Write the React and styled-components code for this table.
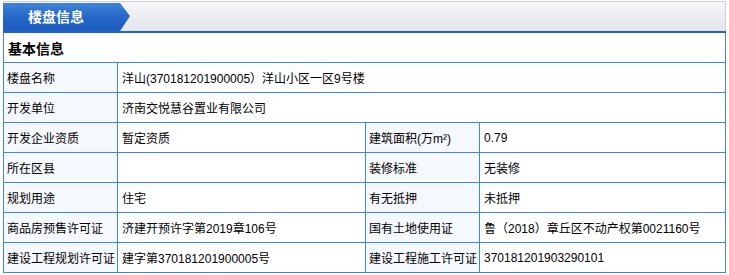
import React from 'react';
import styled, { createGlobalStyle } from 'styled-components';

const GlobalStyle = createGlobalStyle`
  html, body {
    margin: 0;
    padding: 0;
    background: #ffffff;
  }
  body {
    font-family: "Liberation Sans", "Noto Sans CJK SC", Arial, sans-serif;
    font-size: 12px;
    color: #000;
  }
`;

const rows = [
  { cells: [['楼盘名称', '洋山(370181201900005）洋山小区一区9号楼']] },
  { cells: [['开发单位', '济南交悦慧谷置业有限公司']] },
  { cells: [['开发企业资质', '暂定资质'], ['建筑面积(万m²)', '0.79']] },
  { cells: [['所在区县', ''], ['装修标准', '无装修']] },
  { cells: [['规划用途', '住宅'], ['有无抵押', '未抵押']] },
  { cells: [['商品房预售许可证', '济建开预许字第2019章106号'], ['国有土地使用证', '鲁（2018）章丘区不动产权第0021160号']] },
  { cells: [['建设工程规划许可证', '建字第370181201900005号'], ['建设工程施工许可证', '370181201903290101']] },
];

export default function App() {
  return (
    <>
      <GlobalStyle />
      <Page>
        <Header>
          <Tab>楼盘信息</Tab>
          <Band />
        </Header>
        <BlueLine />
        <Table>
          <Caption>基本信息</Caption>
          {rows.map((row, i) =>
            row.cells.map(([label, value], j) => (
              <React.Fragment key={`${i}-${j}`}>
                <Label>{label}</Label>
                <Value wide={row.cells.length === 1}>{value}</Value>
              </React.Fragment>
            ))
          )}
        </Table>
      </Page>
    </>
  );
}

const Page = styled.div`
  width: 723px;
  margin-left: 3px;
`;

const Header = styled.div`
  height: 29px;
  margin-top: 1px;
  display: flex;
  position: relative;
  border-top: 1px solid #cfcbe0;
  border-right: 1px solid #d2d0dc;
  background: linear-gradient(#f6f6f8, #e3e5ec);
`;

const Tab = styled.div`
  width: 128px;
  height: 28px;
  margin-top: 1px;
  flex: none;
  box-sizing: border-box;
  padding-left: 25px;
  color: #ffffff;
  font-family: "Noto Sans CJK SC", sans-serif;
  font-size: 14px;
  font-weight: bold;
  line-height: 27px;
  background: linear-gradient(#3f83d8, #2465c6 55%, #1c5cbf);
  clip-path: polygon(0 0, 117px 0, 127px 13px, 117px 28px, 0 28px);
`;

const Band = styled.div`
  flex: 1;
`;

const BlueLine = styled.div`
  height: 2px;
  background: #1f66c8;
`;

const Table = styled.div`
  display: grid;
  grid-template-columns: 114px 248px 114px 246px;
  grid-auto-rows: 30px;
  border-left: 1px solid #3b8ae0;
`;

const Cell = styled.div`
  box-sizing: border-box;
  border-right: 1px solid #3b8ae0;
  border-bottom: 1px solid #3b8ae0;
  display: flex;
  align-items: center;
  white-space: nowrap;
  overflow: hidden;
`;

const Caption = styled(Cell)`
  grid-column: 1 / -1;
  padding-left: 4px;
  font-family: "Noto Sans CJK SC", sans-serif;
  font-size: 14px;
  font-weight: bold;
`;

const Label = styled(Cell)`
  padding-left: 3px;
  background: #f5f8fc;
`;

const Value = styled(Cell)`
  padding-left: 4px;
  background: #ffffff;
  grid-column: ${props => (props.wide ? 'span 3' : 'span 1')};
`;
